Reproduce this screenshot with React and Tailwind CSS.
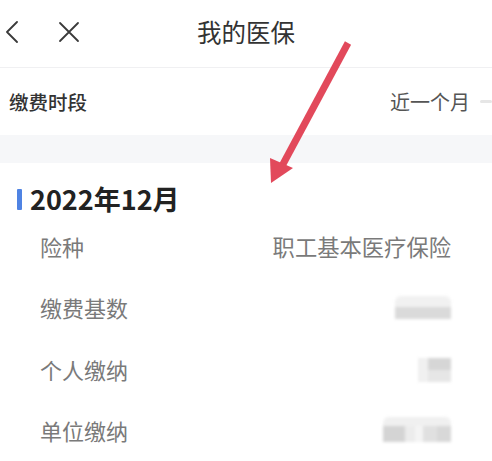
import React from "react";

const font = { fontFamily: '"Noto Sans CJK SC", "Noto Sans", sans-serif' };

function Row({ label, value, blur }) {
  return (
    <div className="h-[61.5px] flex items-center justify-between pl-[40px] pr-[41px]">
      <span className="text-[22px] leading-none text-[#7a7a7a]">{label}</span>
      {value ? (
        <span className="text-[22.3px] leading-none text-[#7a7a7a]">{value}</span>
      ) : (
        blur
      )}
    </div>
  );
}

export default function App() {
  return (
    <div className="relative w-[492px] h-[461px] overflow-hidden bg-white" style={font}>
      {/* header */}
      <div className="relative h-[68px] flex items-center border-b border-[#f0f0f2]">
        <div className="flex items-center pl-[5px] gap-[39px]">
          <svg width="14" height="22" viewBox="0 0 14 22" className="mt-[-3px]">
            <path d="M12 1 L2 11 L12 21" fill="none" stroke="#3a3a3a" strokeWidth="1.8" strokeLinecap="round" strokeLinejoin="round" />
          </svg>
          <svg width="22" height="22" viewBox="0 0 22 22" className="mt-[-4px]">
            <path d="M2 2 L20 20 M20 2 L2 20" fill="none" stroke="#3a3a3a" strokeWidth="1.8" strokeLinecap="round" />
          </svg>
        </div>
        <div className="absolute inset-0 flex items-center justify-center">
          <span className="text-[24.5px] leading-none text-[#333] mt-[-2px]">我的医保</span>
        </div>
      </div>

      {/* period row */}
      <div className="h-[67px] flex items-center justify-between pl-[9px]">
        <span className="text-[19.5px] leading-none font-medium text-[#333]">缴费时段</span>
        <div className="flex items-center">
          <span className="text-[20px] leading-none text-[#555]">近一个月</span>
          <div className="ml-[10px] w-[12px] h-[3px] bg-[#e6e6e6] rounded-sm blur-[0.5px]" />
        </div>
      </div>

      {/* gray band */}
      <div className="h-[28px] bg-[#f6f7f9]" />

      {/* section heading */}
      <div className="pt-[24px] pb-[4px] pl-[17px] flex items-center gap-[8px]">
        <div className="w-[5px] h-[21px] bg-[#4f83e3] rounded-[1px]" />
        <span className="text-[27px] leading-[24px] font-bold text-[#222]">2022年12月</span>
      </div>

      <Row label="险种" value="职工基本医疗保险" />
      <Row
        label="缴费基数"
        blur={
          <div className="w-[56px] h-[23px] flex flex-col blur-[1.5px]">
            <div className="h-[11px] bg-[#f1f1f1] rounded-t-[6px]" />
            <div className="h-[12px] bg-[#dadada]" />
          </div>
        }
      />
      <Row
        label="个人缴纳"
        blur={
          <div className="w-[33px] h-[24px] flex blur-[1.5px] mt-[2px]">
            <div className="w-[10px] bg-[#f0f0f0]" />
            <div className="flex-1 flex flex-col">
              <div className="h-[12px] bg-[#d6d6d6]" />
              <div className="h-[12px] bg-[#e6e6e6]" />
            </div>
          </div>
        }
      />
      <Row
        label="单位缴纳"
        blur={
          <div className="w-[68px] h-[25px] flex flex-col blur-[1.5px] mt-[-2px]">
            <div className="h-[9px] bg-[#f0f0f0] rounded-t-[6px]" />
            <div className="h-[16px] flex">
              <div className="w-[22px] bg-[#d4d4d4]" />
              <div className="w-[10px] bg-[#ececec]" />
              <div className="w-[8px] bg-[#f4f4f4]" />
              <div className="w-[14px] bg-[#e0e0e0]" />
              <div className="flex-1 bg-[#d8d8d8]" />
            </div>
          </div>
        }
      />

      {/* red arrow annotation */}
      <svg className="absolute left-0 top-0 pointer-events-none" width="492" height="461" viewBox="0 0 492 461">
        <line x1="348" y1="43" x2="282" y2="166" stroke="#e2495b" strokeWidth="7" />
        <polygon points="271,183 270,158 293,168" fill="#e2495b" />
      </svg>
    </div>
  );
}
